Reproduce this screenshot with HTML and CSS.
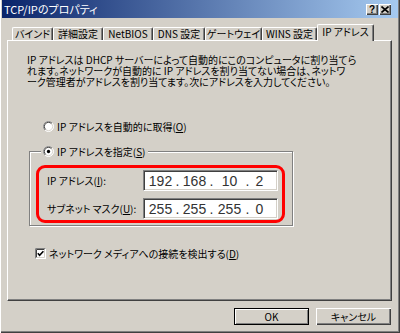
FILE: index.html
```html
<!DOCTYPE html>
<html>
<head>
<meta charset="utf-8">
<title>TCP/IPのプロパティ</title>
<link rel="stylesheet" href="styles.css">
</head>
<body>
<div class="window">
  <div class="titlebar">
    <span class="title">TCP/IPのプロパティ</span>
    <span class="tbtn help">?</span>
    <span class="tbtn close">
      <svg width="8" height="7" viewBox="0 0 8 7"><path d="M0.5 0.5 L7.5 6.5 M7.5 0.5 L0.5 6.5" stroke="#000" stroke-width="1.6" fill="none"/></svg>
    </span>
  </div>

  <div class="tabs">
    <div class="tab t1">バインド</div>
    <div class="tab t2">詳細設定</div>
    <div class="tab t3">NetBIOS</div>
    <div class="tab t4">DNS 設定</div>
    <div class="tab t5">ゲートウェイ</div>
    <div class="tab t6">WINS 設定</div>
    <div class="tab sel">IP アドレス</div>
  </div>

  <div class="panel">
    <p class="intro">IP アドレスは DHCP サーバーによって自動的にこのコンピュータに割り当てら<br>れます。ネットワークが自動的に IP アドレスを割り当てない場合は、ネットワ<br>ーク管理者がアドレスを割り当てます。次にアドレスを入力してください。</p>

    <div class="opt auto">
      <svg class="radio" width="11" height="11" viewBox="0 0 12 12">
        <circle cx="6" cy="6" r="5.5" fill="#fff" stroke="#fff"/>
        <path d="M2.1 9.9 A5.5 5.5 0 0 1 9.9 2.1" stroke="#808080" fill="none"/>
        <circle cx="6" cy="6" r="4.5" fill="#fff" stroke="#d4d0c8"/>
        <path d="M2.8 9.2 A4.5 4.5 0 0 1 9.2 2.8" stroke="#404040" fill="none"/>
      </svg>
      <span>IP アドレスを自動的に取得(<u>O</u>)</span>
    </div>

    <fieldset class="group">
      <legend class="opt">
        <svg class="radio" width="11" height="11" viewBox="0 0 12 12">
          <circle cx="6" cy="6" r="5.5" fill="#fff" stroke="#fff"/>
          <path d="M2.1 9.9 A5.5 5.5 0 0 1 9.9 2.1" stroke="#808080" fill="none"/>
          <circle cx="6" cy="6" r="4.5" fill="#fff" stroke="#d4d0c8"/>
          <path d="M2.8 9.2 A4.5 4.5 0 0 1 9.2 2.8" stroke="#404040" fill="none"/>
          <circle cx="6" cy="6" r="1.8" fill="#000"/>
        </svg>
        <span>IP アドレスを指定(<u>S</u>)</span>
      </legend>

      <div class="mark">
        <div class="row">
          <span class="lbl">IP アドレス(<u>I</u>):</span>
          <div class="ipbox">
            <span class="oct o1">192</span><span class="dot">.</span><span class="oct o2">168</span><span class="dot">.</span><span class="oct o3">10</span><span class="dot">.</span><span class="oct o4">2</span>
          </div>
        </div>
        <div class="row">
          <span class="lbl">サブネット マスク(<u>U</u>):</span>
          <div class="ipbox">
            <span class="oct o1">255</span><span class="dot">.</span><span class="oct o2">255</span><span class="dot">.</span><span class="oct o3">255</span><span class="dot">.</span><span class="oct o4">0</span>
          </div>
        </div>
      </div>
    </fieldset>

    <div class="opt check">
      <svg class="box" width="11" height="11" viewBox="0 0 11 11">
        <rect x="0" y="0" width="11" height="11" fill="#fff"/>
        <path d="M0.5 10.5 V0.5 H10.5" stroke="#808080" fill="none"/>
        <path d="M1.5 9.5 V1.5 H9.5" stroke="#404040" fill="none"/>
        <path d="M1.5 9.5 H9.5 V1.5" stroke="#d4d0c8" fill="none"/>
        <path d="M2.8 5.2 L4.6 7.2 L8.4 3.2" stroke="#000" stroke-width="1.6" fill="none"/>
      </svg>
      <span>ネットワーク メディアへの接続を検出する(<u>D</u>)</span>
    </div>
  </div>

  <div class="buttons">
    <div class="btn default">OK</div>
    <div class="btn">キャンセル</div>
  </div>
</div>
</body>
</html>
```

FILE: styles.css
```css
* { box-sizing: border-box; }

body {
  margin: 0;
  background: #d4d0c8;
  font-family: "Noto Sans CJK JP", "Noto Sans", sans-serif;
  font-size: 10px;
  color: #000;
  font-feature-settings: "palt";
}

/* ventana */
.window {
  width: 400px;
  height: 333px;
  padding: 0 2px 2px 2px;
  background: #d4d0c8;
  box-shadow: inset 1px 0 #fff, inset -1px -1px #404040, inset -2px -2px #808080;
}

.titlebar {
  height: 18px;
  display: flex;
  align-items: center;
  padding: 0 7px 0 2px;
  background: linear-gradient(to right, #0a246a, #a6caf0);
}
.title {
  color: #fff;
  font-size: 11px;
  line-height: 18px;
  flex: 1;
}
.tbtn {
  width: 12px;
  height: 11px;
  margin-left: 1px;
  display: flex;
  align-items: center;
  justify-content: center;
  background: #d4d0c8;
  box-shadow: inset 1px 1px #fff, inset -1px -1px #404040, inset -2px -2px #808080;
  font-family: "Liberation Sans", sans-serif;
  font-weight: bold;
  font-size: 10px;
  line-height: 11px;
}

/* pestañas */
.tabs {
  height: 23px;
  display: flex;
  align-items: flex-end;
  padding-left: 10px;
}
.tab {
  height: 13px;
  margin-bottom: 1px;
  display: flex;
  align-items: center;
  justify-content: center;
  border-top: 1px solid #fff;
  border-left: 1px solid #fff;
  border-right: 1px solid #404040;
  border-radius: 2px 2px 0 0;
  box-shadow: inset -1px 0 #808080;
  background: #d4d0c8;
  white-space: nowrap;
  line-height: 12px;
}
.t1 { width: 41px; }
.t2 { width: 50px; }
.t3 { width: 50px; }
.t4 { width: 52px; }
.t5 { width: 57px; }
.t6 { width: 55px; }
.tab.sel {
  width: 57px;
  height: 17px;
  margin-bottom: 0;
  padding-bottom: 2px;
  position: relative;
  z-index: 1;
}

.panel {
  width: 385px;
  height: 261px;
  margin: -1px 0 0 5px;
  padding: 13px 0 0 19px;
  border-top: 1px solid #fff;
  border-left: 1px solid #fff;
  border-right: 1px solid #404040;
  border-bottom: 1px solid #404040;
  box-shadow: inset -1px -1px #808080;
}

.intro {
  margin: 0;
  line-height: 11px;
  white-space: nowrap;
}

.opt {
  display: flex;
  align-items: center;
  gap: 3px;
  height: 12px;
  white-space: nowrap;
}
.opt.auto {
  margin-top: 33px;
  padding-left: 16px;
}

.group {
  width: 264px;
  margin: 13px 0 0 2px;
  padding: 0 7px 2px 6px;
  border: 1px solid #808080;
  box-shadow: inset 1px 1px #fff, 1px 1px #fff;
}
.group legend {
  margin-left: 5px;
  padding: 0 2px;
  background: #d4d0c8;
}

.mark {
  margin-top: 8px;
  padding: 2px 4px 1px 8px;
  border: 3px solid #f00;
  border-radius: 9px;
  display: flex;
  flex-direction: column;
  gap: 7px;
}
.row {
  height: 21px;
  display: flex;
  align-items: center;
  justify-content: space-between;
}
.ipbox {
  width: 135px;
  height: 21px;
  display: flex;
  align-items: center;
  padding-left: 2px;
  background: #fff;
  border: 1px solid;
  border-color: #808080 #fff #fff #808080;
  box-shadow: inset 1px 1px #404040, inset -1px -1px #d4d0c8;
  font-family: "Liberation Sans", sans-serif;
  font-size: 14px;
  color: #333;
}
.oct { text-align: center; }
.o1 { width: 29px; }
.o2 { width: 29px; }
.o3 { width: 31px; }
.o4 { width: 19px; }
.dot { width: 5px; text-align: center; }

.opt.check {
  margin-top: 22px;
  padding-left: 8px;
  height: 11px;
}

/* botones */
.buttons {
  display: flex;
  justify-content: flex-end;
  gap: 7px;
  margin-top: 7px;
  padding-right: 7px;
}
.btn {
  width: 75px;
  height: 17px;
  display: flex;
  align-items: center;
  justify-content: center;
  box-shadow: inset 1px 1px #fff, inset -1px -1px #404040, inset -2px -2px #808080;
}
.btn.default {
  border: 1px solid #000;
  box-shadow: inset 1px 1px #fff, inset -1px -1px #808080;
}
```
